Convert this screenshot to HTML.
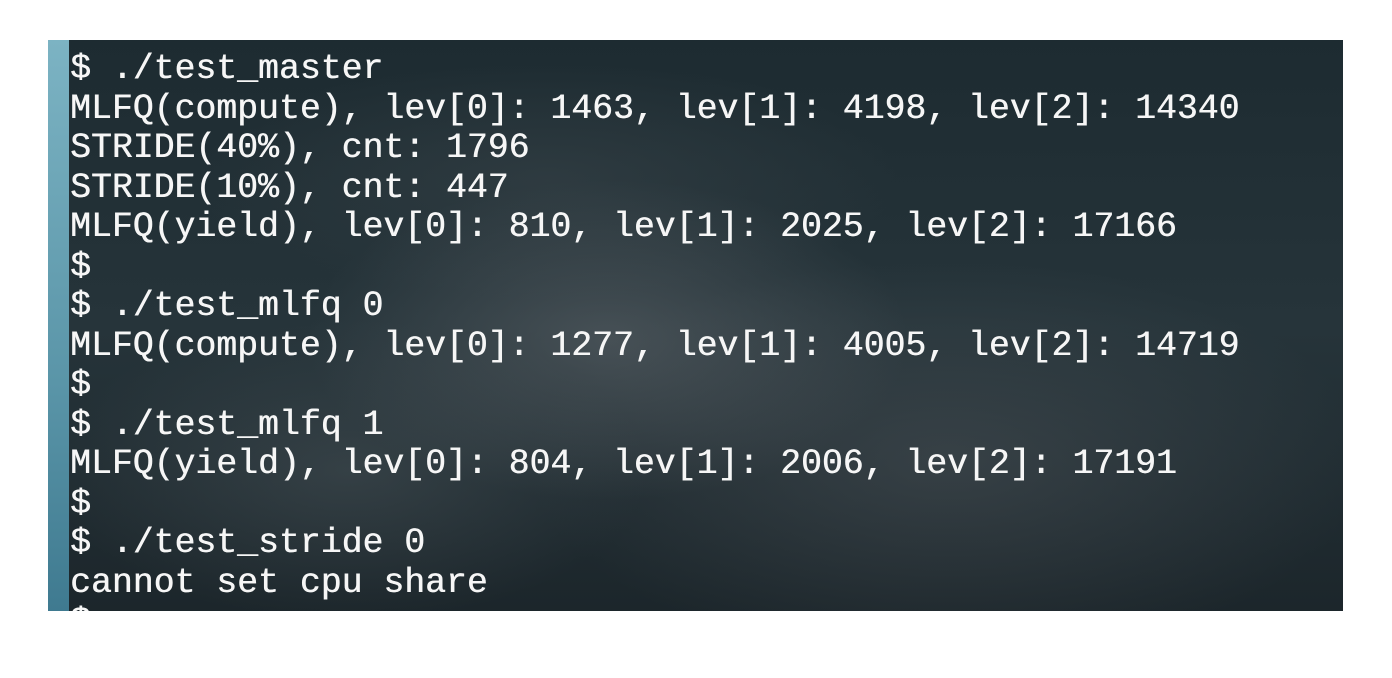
<!DOCTYPE html>
<html><head><meta charset="utf-8"><style>
html,body{margin:0;padding:0;background:#fff;width:1392px;height:678px;overflow:hidden}
#t{position:absolute;left:48px;top:40px;width:1295px;height:571px;overflow:hidden;
background:
radial-gradient(ellipse 300px 160px at 560px 300px,rgba(110,115,120,0.45),transparent),
radial-gradient(ellipse 420px 200px at 900px 420px,rgba(95,100,105,0.35),transparent),
radial-gradient(ellipse 300px 150px at 300px 430px,rgba(90,100,105,0.35),transparent),
radial-gradient(ellipse 350px 120px at 500px 140px,rgba(70,80,85,0.35),transparent),
linear-gradient(180deg,#1d2b31 0%,#26343a 50%,#1c262b 100%);}
#s{position:absolute;left:0;top:0;width:21px;height:100%;background:linear-gradient(180deg,#7cb3c3,#5a95a8 60%,#3f7a90)}
pre{position:absolute;left:22px;top:10px;margin:0;font-family:"Liberation Mono",monospace;font-size:34.8px;line-height:39.5px;color:#f6f6f6;text-shadow:0.5px 0 0 #f6f6f6}
</style></head><body>
<div id="t"><div id="s"></div><pre>$ ./test_master
MLFQ(compute), lev[0]: 1463, lev[1]: 4198, lev[2]: 14340
STRIDE(40%), cnt: 1796
STRIDE(10%), cnt: 447
MLFQ(yield), lev[0]: 810, lev[1]: 2025, lev[2]: 17166
$
$ ./test_mlfq 0
MLFQ(compute), lev[0]: 1277, lev[1]: 4005, lev[2]: 14719
$
$ ./test_mlfq 1
MLFQ(yield), lev[0]: 804, lev[1]: 2006, lev[2]: 17191
$
$ ./test_stride 0
cannot set cpu share
$</pre></div>
</body></html>
